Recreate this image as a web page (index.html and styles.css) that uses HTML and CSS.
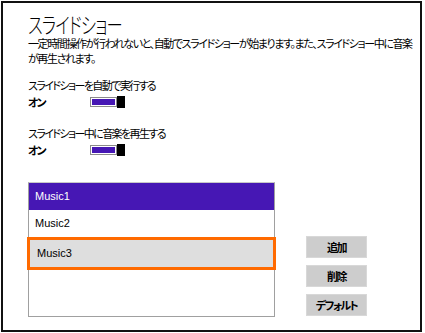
FILE: index.html
```html
<!DOCTYPE html>
<html lang="ja">
<head>
<meta charset="utf-8">
<link rel="stylesheet" href="styles.css">
</head>
<body>
<div class="frame">
  <h1 class="title">スライドショー</h1>
  <p class="desc">一定時間操作が行われないと、自動でスライドショーが始まります。また、スライドショー中に音楽が再生されます。</p>
  <div class="setting first">
    <div class="label">スライドショーを自動で実行する</div>
    <div class="state-row">
      <span class="state">オン</span>
      <span class="toggle"><span class="track"></span><span class="thumb"></span></span>
    </div>
  </div>
  <div class="setting second">
    <div class="label">スライドショー中に音楽を再生する</div>
    <div class="state-row">
      <span class="state">オン</span>
      <span class="toggle"><span class="track"></span><span class="thumb"></span></span>
    </div>
  </div>
  <div class="music-area">
    <div class="list">
      <div class="item selected">Music1</div>
      <div class="item">Music2</div>
      <div class="item focused">Music3</div>
    </div>
    <div class="buttons">
      <button class="btn">追加</button>
      <button class="btn">削除</button>
      <button class="btn">デフォルト</button>
    </div>
  </div>
</div>
</body>
</html>
```
FILE: styles.css
```css
html, body {
  margin: 0;
  padding: 0;
  background: #fff;
}
body {
  font-family: "Noto Sans CJK JP", "Noto Sans", sans-serif;
  font-feature-settings: "palt";
  color: #000;
}
.frame {
  box-sizing: border-box;
  margin: 1px 0 0 1px;
  width: 421px;
  height: 331px;
  border: 2px solid #111;
  padding: 8px 0 0 25px;
}
.title {
  margin: 0;
  font-size: 22px;
  font-weight: 300;
  line-height: 25px;
  height: 25px;
  letter-spacing: -1px;
  transform: scaleX(0.74);
  transform-origin: 0 0;
}
.desc {
  margin: 0;
  width: 386px;
  font-size: 11px;
  line-height: 15px;
  letter-spacing: -1.4px;
}
.setting.first { margin-top: 12px; }
.setting.second { margin-top: 17px; }
.label {
  font-size: 11px;
  line-height: 14px;
  letter-spacing: -1.6px;
}
.state-row {
  display: flex;
  align-items: center;
  margin-top: 3px;
  height: 14px;
}
.state {
  width: 62px;
  font-size: 11px;
  font-weight: 700;
  line-height: 14px;
  letter-spacing: -2px;
}
.toggle {
  display: flex;
  align-items: center;
  height: 12px;
}
.track {
  box-sizing: border-box;
  width: 27px;
  height: 10px;
  border: 1px solid #8a8a8a;
  background: #4617b4;
  box-shadow: inset 0 0 0 1px #fff;
}
.thumb {
  width: 8px;
  height: 12px;
  background: #000;
}
.music-area {
  display: flex;
  align-items: flex-start;
  margin-top: 25px;
}
.list {
  box-sizing: border-box;
  width: 247px;
  height: 135px;
  border: 1px solid #a0a0a0;
  border-top-color: #c8c8c8;
}
.item {
  height: 27px;
  padding-left: 6px;
  font-family: "Liberation Sans", sans-serif;
  font-size: 11px;
  line-height: 27px;
}
.item.selected {
  background: #4617b4;
  color: #fff;
}
.item.focused {
  box-sizing: border-box;
  height: 33px;
  margin: 0 -2px;
  padding-left: 7px;
  border: 3px solid #ff6a00;
  background: #dedede;
  line-height: 27px;
}
.buttons {
  display: flex;
  flex-direction: column;
  gap: 7px;
  margin: 54px 0 0 31px;
}
.btn {
  box-sizing: border-box;
  width: 61px;
  height: 22px;
  padding: 0;
  border: 1px solid #d8d8d8;
  background: #cdcdcd;
  font-family: "Noto Sans CJK JP", sans-serif;
  font-feature-settings: "palt";
  font-size: 11px;
  font-weight: 700;
  color: #000;
  letter-spacing: -1.6px;
}
```
